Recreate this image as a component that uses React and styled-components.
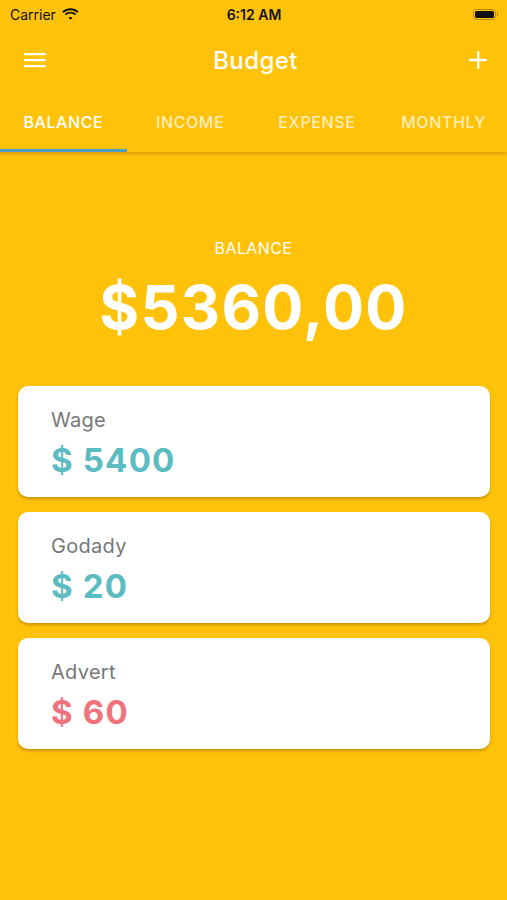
import React from 'react';
import styled, { createGlobalStyle } from 'styled-components';

const GlobalStyle = createGlobalStyle`
  html, body {
    margin: 0;
    padding: 0;
    background: #ffc20a;
  }
  body {
    font-family: Inter, Roboto, 'Noto Sans', sans-serif;
  }
`;

const tabs = ['BALANCE', 'INCOME', 'EXPENSE', 'MONTHLY'];

const entries = [
  { name: 'Wage', amount: 5400, type: 'income' },
  { name: 'Godady', amount: 20, type: 'income' },
  { name: 'Advert', amount: 60, type: 'expense' },
];

const App = () => {
  const [active, setActive] = React.useState(0);

  return (
    <Screen>
      <GlobalStyle />
      <StatusBar>
        <Carrier>
          Carrier
          <svg width="17" height="12" viewBox="0 0 17 12">
            <path d="M8.5 2.2c2.6 0 5 1 6.8 2.7l1.3-1.3C14.4 1.4 11.6.3 8.5.3S2.6 1.4.4 3.6l1.3 1.3C3.5 3.2 5.9 2.2 8.5 2.2z" fill="#111" />
            <path d="M8.5 5.6c1.7 0 3.2.6 4.4 1.7l1.3-1.3c-1.5-1.4-3.5-2.3-5.7-2.3s-4.2.9-5.7 2.3l1.3 1.3c1.2-1.1 2.7-1.7 4.4-1.7z" fill="#111" />
            <path d="M8.5 9c.8 0 1.4.3 2 .8L8.5 11.8 6.5 9.8c.6-.5 1.2-.8 2-.8z" fill="#111" />
          </svg>
        </Carrier>
        <Clock>6:12 AM</Clock>
        <Battery>
          <BatteryBody>
            <BatteryLevel />
          </BatteryBody>
          <BatteryTip />
        </Battery>
      </StatusBar>

      <Header>
        <IconButton aria-label="menu">
          <svg width="22" height="16" viewBox="0 0 22 16">
            <rect x="0" y="1" width="22" height="2.2" rx="1" fill="#fff" />
            <rect x="0" y="7" width="22" height="2.2" rx="1" fill="#fff" />
            <rect x="0" y="13" width="22" height="2.2" rx="1" fill="#fff" />
          </svg>
        </IconButton>
        <Title>Budget</Title>
        <IconButton aria-label="add" align="end">
          <svg width="18" height="18" viewBox="0 0 18 18">
            <rect x="8" y="0" width="2.4" height="18" rx="1" fill="#fff" />
            <rect x="0" y="7.8" width="18" height="2.4" rx="1" fill="#fff" />
          </svg>
        </IconButton>
      </Header>

      <TabBar>
        {tabs.map((t, i) => (
          <Tab key={t} active={i === active} onClick={() => setActive(i)}>
            {t}
          </Tab>
        ))}
      </TabBar>

      <Summary>
        <SummaryLabel>BALANCE</SummaryLabel>
        <SummaryAmount>$5360,00</SummaryAmount>
      </Summary>

      <CardList>
        {entries.map((e) => (
          <Card key={e.name}>
            <CardLabel>{e.name}</CardLabel>
            <CardAmount type={e.type}>$ {e.amount}</CardAmount>
          </Card>
        ))}
      </CardList>
    </Screen>
  );
};

const Screen = styled.div`
  width: 507px;
  min-height: 900px;
  background: #ffc20a;
  display: flex;
  flex-direction: column;
`;

const StatusBar = styled.div`
  height: 28px;
  padding: 0 9px 0 10px;
  display: grid;
  grid-template-columns: 1fr auto 1fr;
  align-items: center;
  color: #111;
  font-size: 14px;
`;

const Carrier = styled.div`
  display: flex;
  align-items: center;
  gap: 6px;
`;

const Clock = styled.div`
  font-weight: 600;
  font-size: 14px;
`;

const Battery = styled.div`
  justify-self: end;
  display: flex;
  align-items: center;
`;

const BatteryBody = styled.div`
  width: 23px;
  height: 11px;
  border: 1px solid rgba(60, 40, 0, 0.35);
  border-radius: 3px;
  padding: 1px;
  box-sizing: border-box;
  display: flex;
`;

const BatteryLevel = styled.div`
  flex: 1;
  background: #111;
  border-radius: 1.5px;
`;

const BatteryTip = styled.div`
  width: 1.5px;
  height: 4px;
  margin-left: 1px;
  background: rgba(60, 40, 0, 0.35);
  border-radius: 0 1px 1px 0;
`;

const Header = styled.div`
  height: 64px;
  padding: 0 20px 0 24px;
  display: grid;
  grid-template-columns: 1fr auto 1fr;
  align-items: center;
`;

const IconButton = styled.div`
  display: flex;
  align-items: center;
  justify-content: ${(p) => (p.align === 'end' ? 'flex-end' : 'flex-start')};
  cursor: pointer;
`;

const Title = styled.div`
  color: #fff;
  font-size: 24px;
  font-weight: 500;
  letter-spacing: 0.4px;
`;

const TabBar = styled.div`
  height: 60px;
  display: grid;
  grid-template-columns: repeat(4, 1fr);
  box-shadow: 0 2px 3px rgba(150, 100, 0, 0.35);
  position: relative;
  z-index: 1;
`;

const Tab = styled.div`
  display: flex;
  align-items: center;
  justify-content: center;
  padding-top: 3px;
  font-size: 16px;
  font-weight: 500;
  letter-spacing: 0.6px;
  color: ${(p) => (p.active ? '#fff' : 'rgba(255, 255, 255, 0.72)')};
  border-bottom: 3px solid ${(p) => (p.active ? '#4a9cc4' : 'transparent')};
  cursor: pointer;
`;

const Summary = styled.div`
  display: flex;
  flex-direction: column;
  align-items: center;
  padding-top: 86px;
`;

const SummaryLabel = styled.div`
  color: #fff;
  font-size: 16px;
  letter-spacing: 0.4px;
`;

const SummaryAmount = styled.div`
  color: #fff;
  font-size: 61px;
  font-weight: 700;
  margin-top: 12px;
  letter-spacing: 1.3px;
`;

const CardList = styled.div`
  display: flex;
  flex-direction: column;
  gap: 15px;
  padding: 42px 17px 0 18px;
`;

const Card = styled.div`
  background: #fff;
  border-radius: 10px;
  height: 111px;
  box-sizing: border-box;
  padding: 22px 33px;
  box-shadow: 0 2px 3px rgba(140, 95, 0, 0.45);
  display: flex;
  flex-direction: column;
`;

const CardLabel = styled.div`
  color: #777;
  font-size: 20px;
  letter-spacing: 0.3px;
`;

const CardAmount = styled.div`
  color: ${(p) => (p.type === 'expense' ? '#f0727c' : '#5bbcc1')};
  font-size: 33px;
  font-weight: 700;
  margin-top: 8px;
  letter-spacing: 1.2px;
`;

export default App;
